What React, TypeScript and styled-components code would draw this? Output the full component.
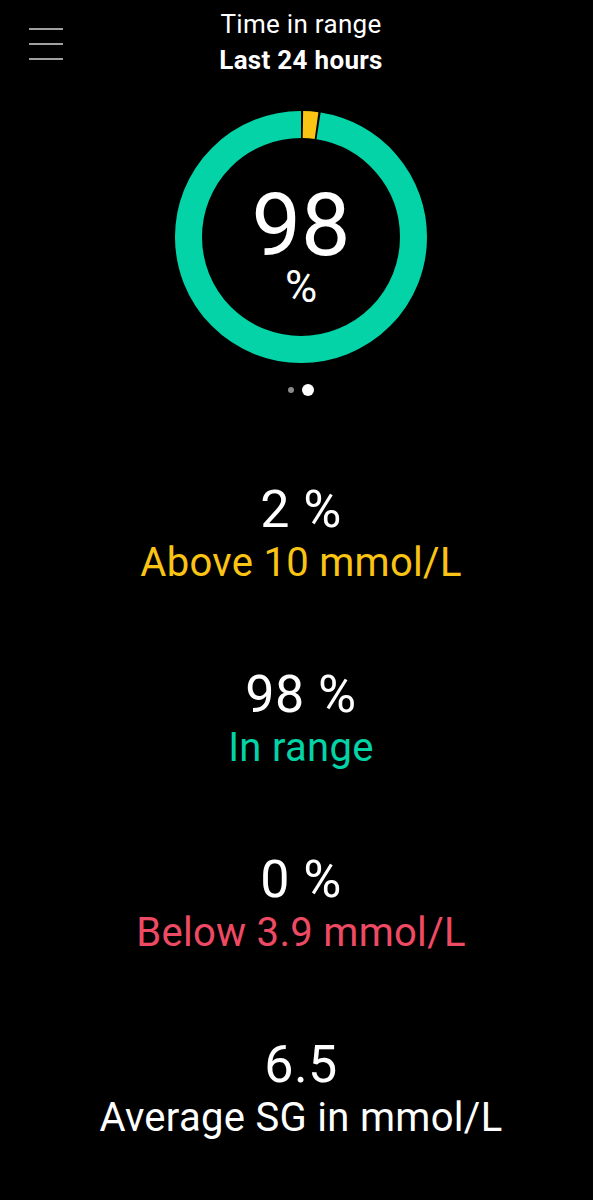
import styled, { createGlobalStyle } from "styled-components"

const GREEN = "#03d3a6"
const YELLOW = "#fac414"
const RED = "#ef4a64"

interface Stat {
  value: string
  label: string
  color: string
}

const STATS: Stat[] = [
  { value: "2 %", label: "Above 10 mmol/L", color: YELLOW },
  { value: "98 %", label: "In range", color: GREEN },
  { value: "0 %", label: "Below 3.9 mmol/L", color: RED },
  { value: "6.5", label: "Average SG in mmol/L", color: "#ffffff" },
]

const GlobalStyle = createGlobalStyle`
  html, body {
    margin: 0;
    background: #000;
  }
  body {
    font-family: Roboto, "Liberation Sans", sans-serif;
    color: #fff;
  }
`

// ring geometry
const SIZE = 252
const STROKE = 27
const R = (SIZE - STROKE) / 2
const C = 2 * Math.PI * R

function arc(fromDeg: number, toDeg: number) {
  const len = ((toDeg - fromDeg) / 360) * C
  const offset = -(fromDeg / 360) * C
  return { dash: `${len} ${C}`, offset }
}

function Ring() {
  const high = arc(1, 8)
  const inRange = arc(9, 360)
  return (
    <RingWrap>
      <svg width={SIZE} height={SIZE} viewBox={`0 0 ${SIZE} ${SIZE}`}>
        <g transform={`rotate(-90 ${SIZE / 2} ${SIZE / 2})`}>
          <circle
            cx={SIZE / 2}
            cy={SIZE / 2}
            r={R}
            fill='none'
            stroke={GREEN}
            strokeWidth={STROKE}
            strokeDasharray={inRange.dash}
            strokeDashoffset={inRange.offset}
          />
          <circle
            cx={SIZE / 2}
            cy={SIZE / 2}
            r={R}
            fill='none'
            stroke={YELLOW}
            strokeWidth={STROKE}
            strokeDasharray={high.dash}
            strokeDashoffset={high.offset}
          />
        </g>
      </svg>
      <RingLabel>
        <BigValue>98</BigValue>
        <Unit>%</Unit>
      </RingLabel>
    </RingWrap>
  )
}

function MenuIcon() {
  return (
    <svg width='36' height='34' viewBox='0 0 36 34'>
      <g stroke='#d6d6d6' strokeWidth='1.6'>
        <line x1='1' y1='2' x2='35' y2='2' />
        <line x1='1' y1='17' x2='35' y2='17' />
        <line x1='1' y1='32' x2='35' y2='32' />
      </g>
    </svg>
  )
}

export default function App() {
  return (
    <>
      <GlobalStyle />
      <Page>
        <Header>
          <MenuButton aria-label='Menu'>
            <MenuIcon />
          </MenuButton>
          <Titles>
            <Title>Time in range</Title>
            <Subtitle>Last 24 hours</Subtitle>
          </Titles>
        </Header>
        <Ring />
        <Dots>
          <Dot />
          <Dot $active />
        </Dots>
        <StatList>
          {STATS.map((stat) => (
            <StatBlock key={stat.label}>
              <StatValue>{stat.value}</StatValue>
              <StatLabel $color={stat.color}>{stat.label}</StatLabel>
            </StatBlock>
          ))}
        </StatList>
      </Page>
    </>
  )
}

const Page = styled.main`
  min-height: 1200px;
  padding-left: 9px;
  display: flex;
  flex-direction: column;
  align-items: center;
  background: #000;
  box-sizing: border-box;
`

const Header = styled.header`
  width: 100%;
  display: grid;
  grid-template-columns: 1fr auto 1fr;
  padding-top: 6px;
`

const MenuButton = styled.button`
  justify-self: start;
  align-self: start;
  background: none;
  border: none;
  padding: 21px 0 0 19px;
  display: flex;
  cursor: pointer;
`

const Titles = styled.div`
  display: flex;
  flex-direction: column;
  align-items: center;
`

const Title = styled.div`
  font-size: 26px;
  line-height: 36px;
  letter-spacing: 0.3px;
  font-weight: 400;
`

const Subtitle = styled(Title)`
  font-weight: 700;
`

const RingWrap = styled.div`
  position: relative;
  width: ${SIZE}px;
  height: ${SIZE}px;
  margin-top: 33px;

  svg {
    display: block;
  }
`

const RingLabel = styled.div`
  position: absolute;
  inset: 0;
  display: flex;
  flex-direction: column;
  align-items: center;
  justify-content: center;
  padding-top: 18px;
`

const BigValue = styled.div`
  font-size: 88px;
  line-height: 80px;
`

const Unit = styled.div`
  font-size: 44px;
  line-height: 40px;
  margin-top: 2px;
`

const Dots = styled.div`
  display: flex;
  align-items: center;
  gap: 8px;
  height: 12px;
  margin-top: 21px;
`

const Dot = styled.span<{ $active?: boolean }>`
  width: ${(p) => (p.$active ? 12 : 6)}px;
  height: ${(p) => (p.$active ? 12 : 6)}px;
  border-radius: 50%;
  background: ${(p) => (p.$active ? "#ffffff" : "#8a8a8a")};
`

const StatList = styled.section`
  display: flex;
  flex-direction: column;
  align-items: center;
  gap: 79px;
  margin-top: 86px;
`

const StatBlock = styled.div`
  display: flex;
  flex-direction: column;
  align-items: center;
`

const StatValue = styled.div`
  font-size: 52px;
  line-height: 56px;
  letter-spacing: 0.5px;
`

const StatLabel = styled.div<{ $color: string }>`
  font-size: 40px;
  line-height: 50px;
  letter-spacing: 0.3px;
  color: ${(p) => p.$color};
`
